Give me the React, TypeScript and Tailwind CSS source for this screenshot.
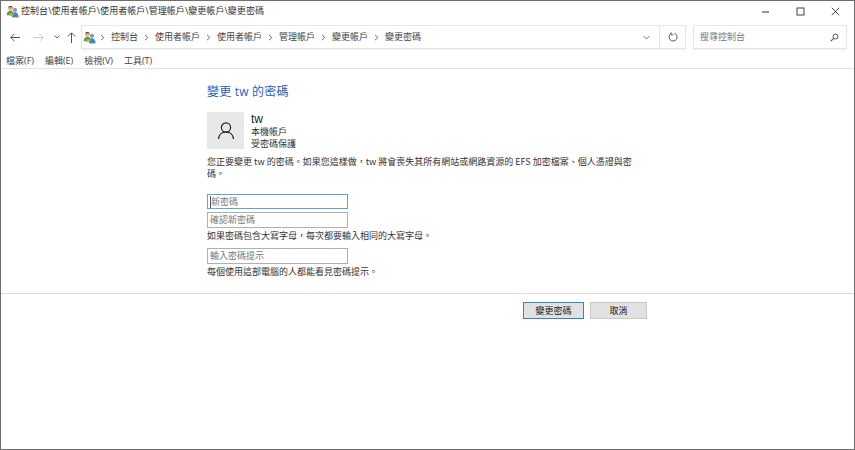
import React from "react";

const font = { fontFamily: '"Open Sans","Noto Sans CJK TC",sans-serif' };
const cjk = { fontFamily: '"Noto Sans CJK TC","Open Sans",sans-serif' };

function Users({ s = 16 }: { s?: number }) {
  return (
    <svg width={s} height={s} viewBox="0 0 16 16" className="shrink-0">
      <circle cx="11" cy="6" r="2.6" fill="#8a9bb0" />
      <path d="M7.500 15c0-3.500 1.200-6 3.500-6s4.500 2.500 4.500 6z" fill="#3f86d0" />
      <circle cx="5.500" cy="4" r="3" fill="#d9b48a" />
      <path d="M2.500 3.500c.8-3 5.200-3 6 0-2-.8-4-.8-6 0z" fill="#5f4a30" />
      <path d="M.8 12.500c0-3.500 2-5.500 4.700-5.500S10 9 10 12.500z" fill="#5f9a4a" />
      <rect x="4" y="10.500" width="6" height="3" rx="0.5" fill="#d9b040" />
      <path d="M8 15c0-2.500 1.200-4.500 3-4.500s4 2 4 4.500z" fill="#3f86d0" />
    </svg>
  );
}

function Chev() {
  return (
    <svg width="5" height="7" viewBox="0 0 5 7" className="shrink-0">
      <path d="M1 .8 3.800 3.500 1 6.200" fill="none" stroke="#666" strokeWidth="1" />
    </svg>
  );
}

const crumbs = ["控制台", "使用者帳戶", "使用者帳戶", "管理帳戶", "變更帳戶", "變更密碼"];

export default function App() {
  return (
    <div lang="zh-TW" className="w-[855px] h-[450px] bg-white flex flex-col border border-[#6e6e6e] overflow-hidden text-[#222] text-[9px] leading-[12px]" style={font}>
      {/* title bar */}
      <div className="h-[20px] flex items-center shrink-0 pl-[5px]">
        <Users s={13} />
        <span className="ml-[2px] text-[#333] tracking-[0.05px]">控制台\使用者帳戶\使用者帳戶\管理帳戶\變更帳戶\變更密碼</span>
        <div className="ml-auto flex items-center gap-[26px] pr-[14px] h-full">
          <svg width="9" height="9" viewBox="0 0 9 9"><path d="M1 5h7" stroke="#333" strokeWidth="1" /></svg>
          <svg width="9" height="9" viewBox="0 0 9 9"><rect x="1" y="1" width="7" height="7" fill="none" stroke="#444" strokeWidth="1" /></svg>
          <svg width="9" height="9" viewBox="0 0 9 9"><path d="M.8.8l7.400 7.400M8.200.8.8 8.200" stroke="#333" strokeWidth="0.9" fill="none" /></svg>
        </div>
      </div>
      {/* nav row */}
      <div className="h-[24px] flex items-center shrink-0 mt-[4px]">
        <div className="w-[80px] flex items-center pl-[9px] shrink-0">
          <svg width="10" height="9" viewBox="0 0 10 9"><path d="M.8 4.500h9.200M4.500.8.8 4.500l3.700 3.700" fill="none" stroke="#555" strokeWidth="1" /></svg>
          <svg className="ml-[13px]" width="11" height="9" viewBox="0 0 11 9"><path d="M0 4.500h10M6.500.8l3.700 3.700-3.700 3.700" fill="none" stroke="#ccc" strokeWidth="1" /></svg>
          <svg className="ml-[10px]" width="6" height="4" viewBox="0 0 6 4"><path d="M.5.500 3 3 5.500.500" fill="none" stroke="#666" strokeWidth="1" /></svg>
          <svg className="ml-[7px]" width="9" height="11" viewBox="0 0 9 11"><path d="M4.500 11V1M.8 4.500 4.500.8l3.700 3.700" fill="none" stroke="#555" strokeWidth="1" /></svg>
        </div>
        <div className="w-[605px] flex shrink-0 h-[24px] border border-[#e6e6e6] shadow-[0_1px_1px_rgba(0,0,0,0.05)]">
          <div className="flex-1 flex items-center pl-[1px] gap-[6px] text-[#444]">
            <div className="mr-[-2px] shrink-0 flex"><Users s={13} /></div>
            {crumbs.map((c, i) => (
              <React.Fragment key={i}>
                <Chev />
                <span>{c}</span>
              </React.Fragment>
            ))}
          </div>
          <div className="w-[25px] flex items-center justify-center">
            <svg width="7" height="5" viewBox="0 0 7 5"><path d="M.5 1 3.500 4 6.500 1" fill="none" stroke="#777" strokeWidth="1" /></svg>
          </div>
          <div className="w-[26px] flex items-center justify-center border-l border-[#e6e6e6]">
            <svg width="10" height="10" viewBox="0 0 10 10"><path d="M3.200 1.500A4 4 0 1 0 6.500 1.300" fill="none" stroke="#555" strokeWidth="1" /><path d="M3 .3v2.500h2.500" fill="none" stroke="#555" strokeWidth="0.9" /></svg>
          </div>
        </div>
        <div className="ml-[7px] w-[154px] h-[24px] flex items-center justify-between border border-[#e6e6e6] shadow-[0_1px_1px_rgba(0,0,0,0.05)] pl-[6px] pr-[7px] text-[#777] shrink-0">
          <span>搜尋控制台</span>
          <svg width="9" height="9" viewBox="0 0 9 9"><circle cx="5.500" cy="3.500" r="2.500" fill="none" stroke="#555" strokeWidth="1" /><path d="M3.700 5.300.8 8.200" stroke="#555" strokeWidth="1.200" /></svg>
        </div>
      </div>
      {/* menu */}
      <div className="h-[20px] flex items-center gap-[11px] pl-[5px] pt-[4px] border-b border-[#e3e3e3] shrink-0 text-[#444]">
        <span>檔案(F)</span>
        <span>編輯(E)</span>
        <span>檢視(V)</span>
        <span>工具(T)</span>
      </div>
      {/* content */}
      <div className="flex-1 flex flex-col">
        <div className="pl-[206px] w-[650px] flex flex-col">
          <h1 className="mt-[15px] text-[12px] leading-[16px] text-[#2a62bc] tracking-[0.2px]">變更 tw 的密碼</h1>
          <div className="mt-[12px] flex">
            <div className="w-[37px] h-[37px] bg-[#e8e8e8] flex items-center justify-center">
              <svg width="18" height="19" viewBox="0 0 18 19"><circle cx="9" cy="6.500" r="4.600" fill="none" stroke="#222" strokeWidth="1.200" /><path d="M1.500 18c.5-4.500 3.500-7 7.500-7s7 2.500 7.500 7" fill="none" stroke="#222" strokeWidth="1.200" /></svg>
            </div>
            <div className="ml-[7px] flex flex-col text-[#333]">
              <span className="text-[12px] leading-[14px] text-[#222] font-['Liberation_Sans']">tw</span>
              <span className="leading-[12px]">本機帳戶</span>
              <span className="leading-[12px]">受密碼保護</span>
            </div>
          </div>
          <p className="mt-[6px] w-[438px] leading-[12px] text-[#333]" style={cjk}>您正要變更 tw 的密碼。如果您這樣做，tw 將會喪失其所有網站或網路資源的 EFS 加密檔案、個人憑證與密碼。</p>
          <div className="mt-[14px] w-[141px] h-[15px] border border-[#5aa5dc] flex items-center pl-[2px] text-[#777]">
            <span className="border-l border-[#555]">新密碼</span>
          </div>
          <div className="mt-[3px] w-[141px] h-[16px] border border-[#b0b0b0] flex items-center pl-[2px] text-[#777]">確認新密碼</div>
          <p className="mt-[2px] leading-[12px] text-[#333]" style={cjk}>如果密碼包含大寫字母，每次都要輸入相同的大寫字母。</p>
          <div className="mt-[6px] w-[141px] h-[16px] border border-[#b0b0b0] flex items-center pl-[2px] text-[#777]">輸入密碼提示</div>
          <p className="mt-[2px] leading-[12px] text-[#333]" style={cjk}>每個使用這部電腦的人都能看見密碼提示。</p>
        </div>
        <div className="mt-[15px] border-t border-[#dcdcdc] flex justify-end pr-[207px] gap-[6px] pt-[8px]">
          <button className="w-[61px] h-[17px] bg-[#e1e1e1] border border-[#2a86d0] text-[#222] flex items-center justify-center">變更密碼</button>
          <button className="w-[57px] h-[17px] bg-[#e1e1e1] border border-[#c8c8c8] text-[#222] flex items-center justify-center">取消</button>
        </div>
      </div>
    </div>
  );
}
